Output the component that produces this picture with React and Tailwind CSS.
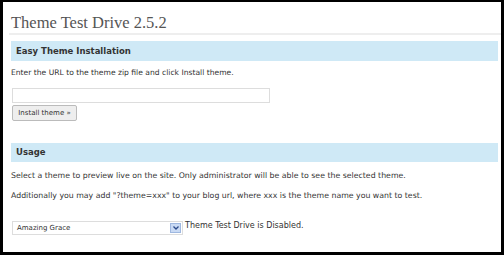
export default function App() {
  const sans = { fontFamily: '"DejaVu Sans", Verdana, sans-serif' };
  return (
    <div className="w-[504px] h-[255px] bg-black pt-[2px] pl-[3px] pr-[3px] pb-[3px]">
      <div className="h-full bg-white pl-[6px] text-[#333]" style={sans}>
        <h1
          className="pl-[2px] pt-[10px] h-[31px] text-[16.5px] leading-[21px] text-[#555]"
          style={{ fontFamily: '"Liberation Serif", Georgia, serif' }}
        >
          Theme Test Drive 2.5.2
        </h1>
        <div className="h-[2px] bg-[#eeeeee]" />

        <div className="mt-[6px] ml-[2px] mr-[3px] h-[20px] bg-[#cfe9f6] pl-[5px] flex items-center text-[8.5px] font-bold text-[#333]">
          Easy Theme Installation
        </div>
        <p className="ml-[2px] mt-[7px] text-[7.6px] leading-[10px]">
          Enter the URL to the theme zip file and click Install theme.
        </p>
        <div className="ml-[3px] mt-[10px] w-[258px] h-[15px] border border-[#dddddd] bg-white" />
        <button className="ml-[3px] mt-[2px] h-[16px] w-[65px] rounded-[2px] border border-[#bbbbbb] bg-[#eeeeee] text-[7px] text-[#333] flex items-center justify-center">
          Install theme »
        </button>

        <div className="mt-[22px] ml-[2px] mr-[3px] h-[19px] bg-[#cfe9f6] pl-[5px] flex items-center text-[8.5px] font-bold text-[#333]">
          Usage
        </div>
        <p className="ml-[2px] mt-[9px] text-[7.8px] leading-[10px]">
          Select a theme to preview live on the site. Only administrator will be able to see the selected theme.
        </p>
        <p className="ml-[2px] mt-[10px] text-[7.8px] leading-[10px]">
          Additionally you may add "?theme=xxx" to your blog url, where xxx is the theme name you want to test.
        </p>
        <div className="ml-[3px] mt-[20px] flex items-start gap-[2px]">
          <div className="w-[171px] h-[14px] border border-[#dddddd] bg-white flex items-center justify-between pl-[4px] pr-[1px]">
            <span className="text-[7px]">Amazing Grace</span>
            <span className="w-[11px] h-[10px] bg-[#c9daf4] border border-[#9fb8e0] flex items-center justify-center">
              <svg width="6" height="4" viewBox="0 0 6 4">
                <path d="M0.5 0.5 L3 3 L5.5 0.5" fill="none" stroke="#2b4a8a" strokeWidth="1.3" />
              </svg>
            </span>
          </div>
          <span className="text-[8px] leading-[10px]">Theme Test Drive is Disabled.</span>
        </div>
      </div>
    </div>
  );
}
